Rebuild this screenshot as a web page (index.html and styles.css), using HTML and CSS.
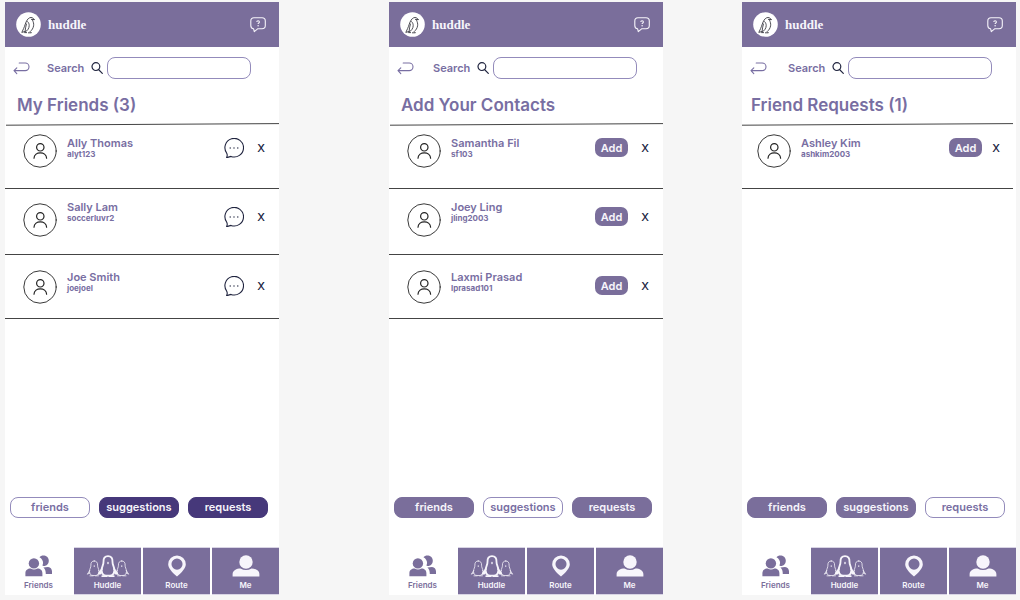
FILE: index.html
```html
<!DOCTYPE html>
<html lang="en">
<head>
<meta charset="utf-8">
<meta name="viewport" content="width=device-width, initial-scale=1">
<title>huddle</title>
<link rel="stylesheet" href="styles.css">
</head>
<body>
<svg class="sprite" aria-hidden="true">
  <symbol id="logo" viewBox="0 0 25 25">
    <circle cx="12.5" cy="12.5" r="12.3" fill="#fff"/>
    <g fill="none" stroke="#3a3a42" stroke-width=".9" stroke-linecap="round" stroke-linejoin="round">
      <path d="M18.2 7.6L16.6 5.8C14.6 4.9 12.4 6 11.2 8C9.4 10.6 9 13.6 7.6 16.6L5.8 20.4L8.6 19.6"/>
      <path d="M16.6 8.2C17.2 10 18 11.6 17.6 13.8C17.2 16.2 16 18 14.2 19.6L15.4 20.8H12.4"/>
      <path d="M10.4 12C9.6 14.4 9.4 17 9 20.2C11.4 18.6 13.2 16.4 13.2 13.6C13.2 11.8 12.6 10.6 11.6 9.6"/>
      <path d="M18.2 7.6L15.4 7.4M8.6 20.6H10.6"/>
    </g>
  </symbol>
  <symbol id="help" viewBox="0 0 16 16">
    <path d="M4 .8H12Q15.3.8 15.3 4V8.6Q15.3 11.8 12 11.8H7.6L4.3 14.6L3.6 11.8Q.8 11.6.8 8.6V4Q.8.8 4 .8Z" fill="none" stroke="currentColor" stroke-width="1.1" stroke-linejoin="round"/>
    <path d="M6.8 5C6.8 3.4 9.4 3.4 9.4 5C9.4 6 8.1 6 8.1 7.1" fill="none" stroke="currentColor" stroke-width="1.1"/>
    <circle cx="8.1" cy="8.8" r=".75" fill="currentColor"/>
  </symbol>
  <symbol id="back" viewBox="0 0 17 13">
    <path d="M6.2 1H12.2A3.8 3.8 0 0 1 12.2 8.6H1M3.8 5.8L1 8.6L3.8 11.6" fill="none" stroke="currentColor" stroke-width="1.1" stroke-linecap="round" stroke-linejoin="round"/>
  </symbol>
  <symbol id="search" viewBox="0 0 12 12">
    <path d="M7.5 7.5L11.3 11.3" stroke="currentColor" stroke-width="1.2" stroke-linecap="round"/>
    <circle cx="4.9" cy="4.6" r="3.9" fill="none" stroke="currentColor" stroke-width="1.2"/>
  </symbol>
  <symbol id="avatar" viewBox="0 0 34 34">
    <g fill="none" stroke="#222" stroke-linecap="round">
      <circle cx="17" cy="17" r="16.2" stroke-width=".9"/>
      <circle cx="17.3" cy="13.3" r="3.7" stroke-width="1.2"/>
      <path d="M11 24.2C11.2 17.2 23.4 17.2 23.6 24.2" stroke-width="1.2"/>
    </g>
  </symbol>
  <symbol id="chat" viewBox="0 0 20 20">
    <path d="M2.6 19.4C3.4 18.2 3.4 16.6 2.6 15A9.3 9.3 0 1 1 7 18.4C5.6 18.6 4.2 19.4 2.6 19.4Z" fill="none" stroke="currentColor" stroke-width="1.1" stroke-linejoin="round"/>
    <g fill="currentColor"><circle cx="6.2" cy="10" r=".7"/><circle cx="10" cy="10" r=".7"/><circle cx="13.8" cy="10" r=".7"/></g>
  </symbol>
  <symbol id="friends" viewBox="0 0 28 22">
    <g fill="currentColor">
      <path d="M14.5 2.2C16.8-.8 23.8.2 23.8 5.8C23.8 9.2 21.2 11.4 18.4 11L17.4 10.6C19 7.4 17.6 4 14.5 2.2Z"/>
      <path d="M18.4 12.6L23 12C25.8 12.4 27 14.4 27 16.4V19H20.8C20.8 16.2 20.2 14 18.4 12.6Z"/>
      <circle cx="8.9" cy="8.4" r="5.2"/>
      <path d="M.4 21.2V18.2C.4 15 3.2 13.4 5.6 13.6Q9 15.6 12.4 13.6C14.8 13.4 17.4 15 17.4 18.2V21.2Z"/>
    </g>
  </symbol>
  <symbol id="huddle" viewBox="0 0 44 23">
    <defs>
      <g id="penguin">
        <path d="M0-10.5C-3.4-10.5-4.9-8-4.7-4.6C-4.6-1.2-6.4.2-6.7 4C-6.9 7.8-4.6 10-1.8 10H1.8C4.6 10 6.9 7.8 6.7 4C6.4.2 4.6-1.2 4.7-4.6C4.9-8 3.4-10.5 0-10.5Z"/>
        <path d="M-6.4 3L-9.7 8.2L-6.3 6.5M6.4 3L9.7 8.2L6.3 6.5M-6 10.5H-1.5M1.5 10.5H6"/>
      </g>
    </defs>
    <g fill="none" stroke="currentColor" stroke-linejoin="round" stroke-linecap="round">
      <use href="#penguin" transform="translate(7.6 14) scale(.74)" stroke-width="1.1"/>
      <use href="#penguin" transform="translate(36.4 14) scale(.74)" stroke-width="1.1"/>
      <use href="#penguin" transform="translate(22 11.6)" stroke-width="1.9"/>
    </g>
    <g fill="currentColor">
      <ellipse cx="22" cy="8.4" rx=".8" ry="1.3"/>
      <ellipse cx="7.6" cy="11.6" rx=".6" ry=".9"/>
      <ellipse cx="36.4" cy="11.6" rx=".6" ry=".9"/>
    </g>
  </symbol>
  <symbol id="route" viewBox="0 0 20 23">
    <path fill="currentColor" fill-rule="evenodd" d="M10 .5A9.2 9.2 0 0 0 .8 9.7C.8 14 5 18.2 10 22.5C15 18.2 19.2 14 19.2 9.7A9.2 9.2 0 0 0 10 .5ZM10 3.7A5.8 5.8 0 1 1 10 15.3A5.8 5.8 0 1 1 10 3.7Z"/>
  </symbol>
  <symbol id="me" viewBox="0 0 28 23">
    <circle cx="14" cy="7.3" r="7" fill="currentColor"/>
    <path fill="currentColor" d="M0 22.5V20C0 16.2 4.2 14.2 8.2 14.2Q14 17.4 19.8 14.2C23.8 14.2 28 16.2 28 20V22.5Z"/>
  </symbol>
</svg>

<main class="board">
  <section class="phone phone-friends">
    <header class="topbar">
      <svg class="logo"><use href="#logo"/></svg>
      <span class="brand">huddle</span>
      <button class="icon-button help" aria-label="Help"><svg><use href="#help"/></svg></button>
    </header>
    <form class="search">
      <button type="button" class="icon-button back" aria-label="Back"><svg><use href="#back"/></svg></button>
      <label for="search-friends">Search</label>
      <svg class="lens"><use href="#search"/></svg>
      <input id="search-friends" type="text">
    </form>
    <h1 class="title">My Friends (3)</h1>
    <svg class="divider" viewBox="0 0 274 3" preserveAspectRatio="none"><path d="M1 2.2L274 .6"/></svg>
    <ul class="people">
      <li class="person">
        <svg class="avatar"><use href="#avatar"/></svg>
        <div class="who"><strong>Ally Thomas</strong><span>alyt123</span></div>
        <div class="actions"><button class="icon-button chat" aria-label="Message Ally Thomas"><svg><use href="#chat"/></svg></button><button class="remove">X</button></div>
      </li>
      <li class="person">
        <svg class="avatar"><use href="#avatar"/></svg>
        <div class="who"><strong>Sally Lam</strong><span>soccerluvr2</span></div>
        <div class="actions"><button class="icon-button chat" aria-label="Message Sally Lam"><svg><use href="#chat"/></svg></button><button class="remove">X</button></div>
      </li>
      <li class="person">
        <svg class="avatar"><use href="#avatar"/></svg>
        <div class="who"><strong>Joe Smith</strong><span>joejoel</span></div>
        <div class="actions"><button class="icon-button chat" aria-label="Message Joe Smith"><svg><use href="#chat"/></svg></button><button class="remove">X</button></div>
      </li>
    </ul>
    <div class="filters">
      <button class="filter current">friends</button>
      <button class="filter">suggestions</button>
      <button class="filter">requests</button>
    </div>
    <nav class="tabs">
      <a class="tab active" href="#"><svg class="tab-friends"><use href="#friends"/></svg>Friends</a>
      <a class="tab" href="#"><svg class="tab-huddle"><use href="#huddle"/></svg>Huddle</a>
      <a class="tab" href="#"><svg class="tab-route"><use href="#route"/></svg>Route</a>
      <a class="tab" href="#"><svg class="tab-me"><use href="#me"/></svg>Me</a>
    </nav>
  </section>

  <section class="phone phone-contacts">
    <header class="topbar">
      <svg class="logo"><use href="#logo"/></svg>
      <span class="brand">huddle</span>
      <button class="icon-button help" aria-label="Help"><svg><use href="#help"/></svg></button>
    </header>
    <form class="search">
      <button type="button" class="icon-button back" aria-label="Back"><svg><use href="#back"/></svg></button>
      <label for="search-contacts">Search</label>
      <svg class="lens"><use href="#search"/></svg>
      <input id="search-contacts" type="text">
    </form>
    <h1 class="title">Add Your Contacts</h1>
    <svg class="divider" viewBox="0 0 274 3" preserveAspectRatio="none"><path d="M1 2.2L274 .6"/></svg>
    <ul class="people">
      <li class="person">
        <svg class="avatar"><use href="#avatar"/></svg>
        <div class="who"><strong>Samantha Fil</strong><span>sf103</span></div>
        <div class="actions"><button class="add">Add</button><button class="remove">X</button></div>
      </li>
      <li class="person">
        <svg class="avatar"><use href="#avatar"/></svg>
        <div class="who"><strong>Joey Ling</strong><span>jling2003</span></div>
        <div class="actions"><button class="add">Add</button><button class="remove">X</button></div>
      </li>
      <li class="person">
        <svg class="avatar"><use href="#avatar"/></svg>
        <div class="who"><strong>Laxmi Prasad</strong><span>lprasad101</span></div>
        <div class="actions"><button class="add">Add</button><button class="remove">X</button></div>
      </li>
    </ul>
    <div class="filters">
      <button class="filter">friends</button>
      <button class="filter current">suggestions</button>
      <button class="filter">requests</button>
    </div>
    <nav class="tabs">
      <a class="tab active" href="#"><svg class="tab-friends"><use href="#friends"/></svg>Friends</a>
      <a class="tab" href="#"><svg class="tab-huddle"><use href="#huddle"/></svg>Huddle</a>
      <a class="tab" href="#"><svg class="tab-route"><use href="#route"/></svg>Route</a>
      <a class="tab" href="#"><svg class="tab-me"><use href="#me"/></svg>Me</a>
    </nav>
  </section>

  <section class="phone phone-requests">
    <header class="topbar">
      <svg class="logo"><use href="#logo"/></svg>
      <span class="brand">huddle</span>
      <button class="icon-button help" aria-label="Help"><svg><use href="#help"/></svg></button>
    </header>
    <form class="search">
      <button type="button" class="icon-button back" aria-label="Back"><svg><use href="#back"/></svg></button>
      <label for="search-requests">Search</label>
      <svg class="lens"><use href="#search"/></svg>
      <input id="search-requests" type="text">
    </form>
    <h1 class="title">Friend Requests (1)</h1>
    <svg class="divider" viewBox="0 0 274 3" preserveAspectRatio="none"><path d="M0 2.2L271 .6"/></svg>
    <ul class="people">
      <li class="person">
        <svg class="avatar"><use href="#avatar"/></svg>
        <div class="who"><strong>Ashley Kim</strong><span>ashkim2003</span></div>
        <div class="actions"><button class="add">Add</button><button class="remove">X</button></div>
      </li>
    </ul>
    <div class="filters">
      <button class="filter">friends</button>
      <button class="filter">suggestions</button>
      <button class="filter current">requests</button>
    </div>
    <nav class="tabs">
      <a class="tab active" href="#"><svg class="tab-friends"><use href="#friends"/></svg>Friends</a>
      <a class="tab" href="#"><svg class="tab-huddle"><use href="#huddle"/></svg>Huddle</a>
      <a class="tab" href="#"><svg class="tab-route"><use href="#route"/></svg>Route</a>
      <a class="tab" href="#"><svg class="tab-me"><use href="#me"/></svg>Me</a>
    </nav>
  </section>
</main>
</body>
</html>
```

FILE: styles.css
```css
:root {
  --purple: #7a6e9b;
  --text: #786ea2;
  --outline: #938bbb;
  --ink: #20243f;
  --filter: var(--purple);
}

* { box-sizing: border-box; }

body {
  margin: 0;
  background: #f6f6f6;
  color: var(--text);
  font-family: Inter, "Liberation Sans", sans-serif;
  font-size: 11px;
  font-weight: 600;
}

button, input {
  font: inherit;
  color: inherit;
}

button {
  padding: 0;
  border: 0;
  background: none;
  cursor: pointer;
}

svg { display: block; }

.sprite {
  position: absolute;
  width: 0;
  height: 0;
}

.board {
  display: grid;
  grid-template-columns: 274fr 110fr 274fr 79fr 274fr;
  min-height: 100vh;
  padding: 2px 4px 5px 5px;
}

.phone {
  display: flex;
  flex-direction: column;
  min-width: 0;
  background: #fff;
}

.phone-friends { grid-column: 1; --filter: #46387a; }
.phone-contacts { grid-column: 3; }
.phone-requests { grid-column: 5; }

.topbar {
  display: flex;
  align-items: center;
  gap: 7px;
  height: 45px;
  padding: 0 13px 0 11px;
  background: var(--purple);
  color: #f7f5fb;
}

.logo {
  width: 25px;
  height: 25px;
}

.brand {
  font-family: "Liberation Serif", serif;
  font-size: 13px;
  font-weight: 700;
}

.help { margin-left: auto; }

.help svg {
  width: 16px;
  height: 16px;
}

.search {
  display: flex;
  align-items: center;
  height: 42px;
  padding-left: 8px;
}

.back { margin-right: 17px; }
.phone-contacts .back { margin-right: 19px; }
.phone-requests .back { margin-right: 21px; }

.back svg {
  width: 17px;
  height: 13px;
}

.search label { width: 44px; }

.lens {
  width: 12px;
  height: 12px;
  margin-right: 4px;
  color: var(--ink);
}

.search input {
  width: 54%;
  height: 22px;
  padding: 0 8px;
  border: 1px solid var(--outline);
  border-radius: 8px;
  background: #fff;
}

.title {
  height: 34px;
  margin: 0;
  padding: 4px 0 0 12px;
  font-size: 17px;
  font-weight: 600;
  line-height: 24px;
}

.phone-requests .title { padding-left: 9px; }

.divider {
  width: 100%;
  height: 3px;
  fill: none;
  stroke: #444;
}

.people {
  margin: 0;
  padding: 0;
  list-style: none;
}

.phone-requests .people { margin-right: 3px; }

.person {
  display: flex;
  align-items: flex-start;
  gap: 10px;
  height: 63px;
  padding: 8px 11px 0 18px;
  border-bottom: 1px solid #444;
}

.phone-requests .person { padding: 8px 10px 0 15px; }

.person:nth-child(2) {
  height: 66px;
  padding-top: 11px;
}

.person:nth-child(3) {
  height: 64px;
  padding-top: 15px;
}

.avatar {
  width: 34px;
  height: 34px;
}

.person:nth-child(2) .avatar { margin-top: 3px; }

.who {
  display: flex;
  flex-direction: column;
}

.who strong {
  font-weight: 600;
  line-height: 14px;
}

.who span {
  font-size: 8px;
  font-weight: 700;
  line-height: 8px;
}

.person:first-child .who { padding-top: 2px; }

.actions {
  display: flex;
  align-items: center;
  gap: 10px;
  margin: 4px 0 0 auto;
}

.person:nth-child(2) .actions { margin-top: 7px; }
.person:nth-child(3) .actions { margin-top: 6px; }
.phone-requests .actions { gap: 7px; }

.chat { color: var(--ink); }

.chat svg {
  width: 20px;
  height: 20px;
}

.add {
  width: 33px;
  height: 19px;
  border-radius: 7px;
  background: var(--purple);
  color: #f7f5fb;
}

.remove {
  width: 14px;
  color: var(--ink);
  font-weight: 500;
}

.filters {
  display: grid;
  grid-template-columns: repeat(3, 1fr);
  gap: 9px;
  margin-top: auto;
  padding: 0 11px 29px 5px;
}

.filter {
  height: 21px;
  padding-bottom: 1px;
  border: 1px solid var(--filter);
  border-radius: 8px;
  background: var(--filter);
  color: #f7f5fb;
}

.filter.current {
  border-color: var(--outline);
  background: #fff;
  color: var(--text);
}

.tabs {
  display: grid;
  grid-template-columns: repeat(4, 1fr);
  gap: 2px;
  height: 48px;
}

.tab {
  display: flex;
  flex-direction: column;
  align-items: center;
  gap: 3px;
  padding-top: 7px;
  border: 1px solid #d8d4e4;
  border-width: 1px 0;
  background: var(--purple);
  color: #f7f5fb;
  font-size: 8px;
  line-height: 10px;
  text-decoration: none;
}

.tab.active {
  border-color: #fff;
  background: #fff;
  color: var(--purple);
}

.tab svg { height: 22px; }
.tab-friends { width: 28px; }
.tab-huddle { width: 44px; }
.tab-route { width: 20px; }
.tab-me { width: 28px; }
```
